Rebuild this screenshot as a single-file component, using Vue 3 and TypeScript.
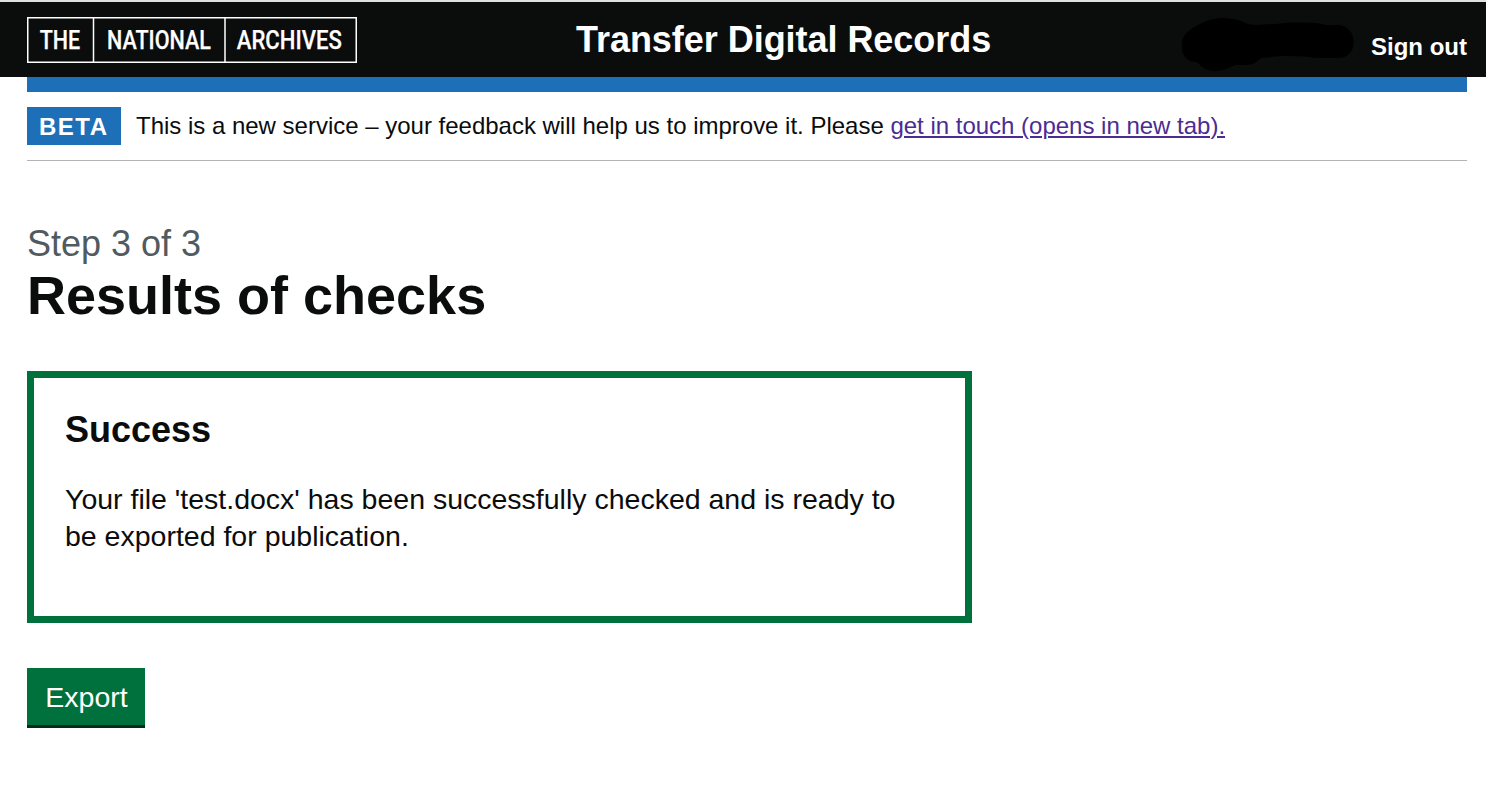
<script setup lang="ts">
interface LogoWord {
  text: string
  x: number
  width: number
}

const logoWords: LogoWord[] = [
  { text: 'THE', x: 12.8, width: 40.4 },
  { text: 'NATIONAL', x: 80, width: 104 },
  { text: 'ARCHIVES', x: 209.8, width: 105 },
]
const fileName: string = 'test.docx'
</script>

<template>
  <div class="page">
    <header class="header">
      <a class="logo" aria-label="The National Archives">
        <svg width="330" height="46" viewBox="0 0 330 46">
          <rect class="frame" x="0.75" y="0.75" width="328.5" height="44.5" />
          <path class="frame" d="M66.5 0V46M198 0V46" />
          <text
            v-for="word in logoWords"
            :key="word.text"
            class="logo-word"
            :x="word.x"
            y="32.2"
            :textLength="word.width"
            lengthAdjust="spacingAndGlyphs"
          >{{ word.text }}</text>
        </svg>
      </a>
      <div class="title">Transfer Digital Records</div>
      <div class="account">
        <svg class="redaction" width="174" height="54" viewBox="0 0 174 54">
          <path d="M1 28C0 17 8 12 17 7C35-3 52-1 67 6C75 8 85 6 95 6C115 4 135 4 145 7H157C178 8 178 40 157 40H135C120 38 105 37 80 40C76 42 75 47 65 47H55C48 49 44 53 34 53C26 53 20 49 16 44C6 44 0 37 1 28Z" />
        </svg>
        <a class="sign-out">Sign out</a>
      </div>
    </header>

    <div class="container">
      <div class="bar"></div>
      <div class="phase">
        <strong class="tag">BETA</strong>
        <span class="phase-text">This is a new service – your feedback will help us to improve it. Please <a class="link">get in touch (opens in new tab).</a></span>
      </div>

      <main>
        <span class="caption">Step 3 of 3</span>
        <h1>Results of checks</h1>
        <section class="panel">
          <h2>Success</h2>
          <p>Your file '{{ fileName }}' has been successfully checked and is ready to be exported for publication.</p>
        </section>
        <button class="button" type="button">Export</button>
      </main>
    </div>
  </div>
</template>

<style>
body {
  background: #fff;
  overflow: hidden;
}
</style>

<style scoped>
.page {
  height: 811px;
  box-sizing: border-box;
  border-top: 2px solid #dee1e3;
  font-family: "Liberation Sans", Arial, sans-serif;
  color: #0b0c0c;
}
.header {
  display: grid;
  grid-template-columns: 549px auto 1fr;
  height: 75px;
  box-sizing: border-box;
  padding: 15px 19px 0 27px;
  background: #0b0c0c;
  color: #fff;
}
.logo {
  display: block;
  height: 46px;
}
.logo svg {
  display: block;
  overflow: visible;
}
.frame {
  fill: none;
  stroke: #fff;
  stroke-width: 1.5;
}
.logo-word {
  font-family: Roboto, sans-serif;
  font-size: 26px;
  font-weight: 500;
  fill: #fff;
  stroke: #fff;
  stroke-width: 0.25;
}
.title {
  margin-top: 3px;
  font-size: 36px;
  line-height: 40px;
  font-weight: 700;
  letter-spacing: -0.04px;
  white-space: nowrap;
}
.account {
  display: flex;
  justify-content: flex-end;
}
.redaction {
  margin: 1px 16px 0 0;
}
.sign-out {
  margin-top: 15px;
  font-size: 24px;
  line-height: 30px;
  font-weight: 700;
  white-space: nowrap;
}
.container {
  margin: 0 19px 0 27px;
}
.bar {
  height: 15px;
  background: #1d70b8;
}
.phase {
  display: flex;
  align-items: flex-start;
  gap: 15px;
  height: 69px;
  box-sizing: border-box;
  padding-top: 15px;
  border-bottom: 1px solid #b1b4b6;
}
.tag {
  box-sizing: border-box;
  width: 94px;
  height: 38px;
  padding-left: 12px;
  background: #1d70b8;
  color: #fff;
  font-size: 24px;
  line-height: 39px;
  letter-spacing: 1.5px;
}
.phase-text {
  font-size: 24px;
  line-height: 38px;
  letter-spacing: -0.008px;
  white-space: nowrap;
}
.link {
  color: #4c2c92;
  text-decoration: underline;
  text-decoration-thickness: 1.5px;
  text-underline-offset: 2.4px;
}
.caption {
  display: block;
  margin-top: 60px;
  font-size: 36px;
  line-height: 45px;
  color: #505a5f;
}
h1 {
  margin: 0 0 47px;
  font-size: 54px;
  line-height: 58px;
}
.panel {
  box-sizing: border-box;
  width: 945px;
  height: 252px;
  padding: 31px 31px 0;
  border: 7px solid #00703c;
}
h2 {
  margin: 0 0 29.5px;
  font-size: 36px;
  line-height: 42px;
}
p {
  margin: 0;
  font-size: 28.5px;
  line-height: 37.5px;
}
.button {
  display: block;
  width: 118px;
  height: 60px;
  margin-top: 45px;
  padding: 1px 0 0 1px;
  border: 0;
  border-bottom: 3px solid #002d18;
  background: #00703c;
  color: #fff;
  font-family: inherit;
  font-size: 28.5px;
  line-height: 56px;
}
</style>
